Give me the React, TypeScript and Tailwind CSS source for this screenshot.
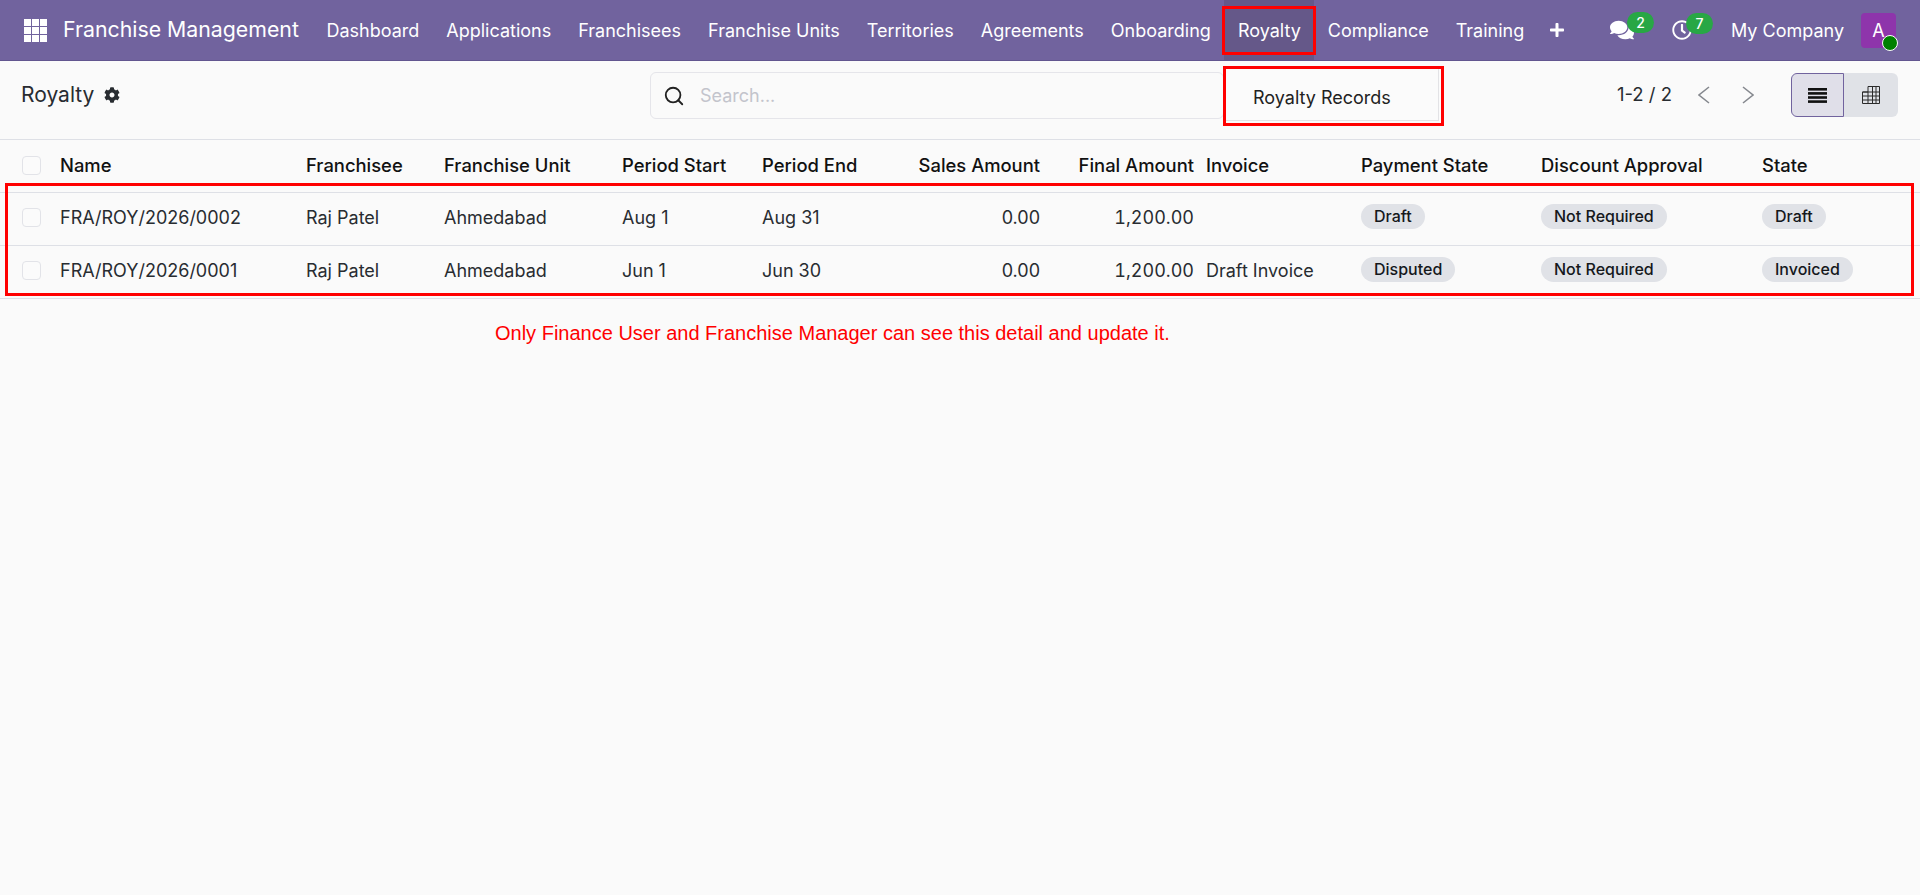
import React from 'react';
import { FaCog, FaComments, FaPlus, FaRegClock } from 'react-icons/fa';
import { Search } from 'lucide-react';

const navItems = ['Dashboard', 'Applications', 'Franchisees', 'Franchise Units', 'Territories', 'Agreements', 'Onboarding', 'Royalty', 'Compliance', 'Training'];

const columns = [
    { label: 'Name', width: 'w-[246px]', right: false },
    { label: 'Franchisee', width: 'w-[138px]', right: false },
    { label: 'Franchise Unit', width: 'w-[178px]', right: false },
    { label: 'Period Start', width: 'w-[140px]', right: false },
    { label: 'Period End', width: 'w-[144px]', right: false },
    { label: 'Sales Amount', width: 'w-[146px]', right: true },
    { label: 'Final Amount', width: 'w-[154px]', right: true },
    { label: 'Invoice', width: 'w-[155px]', right: false },
    { label: 'Payment State', width: 'w-[180px]', right: false },
    { label: 'Discount Approval', width: 'w-[221px]', right: false },
    { label: 'State', width: 'w-[164px]', right: false },
];

const rows = [
    { name: 'FRA/ROY/2026/0002', start: 'Aug 1', end: 'Aug 31', invoice: '', payment: 'Draft', state: 'Draft' },
    { name: 'FRA/ROY/2026/0001', start: 'Jun 1', end: 'Jun 30', invoice: 'Draft Invoice', payment: 'Disputed', state: 'Invoiced' },
];

const Checkbox: React.FC = () => (
    <div className="w-[19px] h-[19px] rounded-[4px] border border-[#e2e3e8] bg-[#fbfbfb] mx-auto" />
);

const Badge: React.FC<{ label: string }> = ({ label }) => (
    <span className="block w-fit rounded-full bg-[#e0e2e7] px-[13px] h-[25px] leading-[25px] text-[16px] font-medium text-[#15181c] mb-[4px]">{label}</span>
);

const AppsIcon: React.FC = () => (
    <svg width="23" height="23" viewBox="0 0 23 23" fill="white">
        {[0, 8, 16].map((y) => [0, 8, 16].map((x) => <rect key={`${x}-${y}`} x={x} y={y} width="7" height="7" />))}
    </svg>
);

const ListIcon: React.FC = () => (
    <svg width="19" height="15" viewBox="0 0 19 15" fill="#111">
        <rect y="0" width="19" height="2.6" />
        <rect y="4.1" width="19" height="2.6" />
        <rect y="8.2" width="19" height="2.6" />
        <rect y="12.3" width="19" height="2.6" />
    </svg>
);

const PivotIcon: React.FC = () => (
    <svg width="18" height="18" viewBox="0 0 18 18" fill="none" stroke="#2a2a2a" strokeWidth="1">
        <path d="M6 .5h11.5v17H.5V6H6zM.5 6h17M.5 10h17M.5 14h17M6 6v11.5M10.5 .5v17M14 .5v17" />
    </svg>
);

const Chevron: React.FC<{ flip?: boolean }> = ({ flip }) => (
    <svg width="12" height="18" viewBox="0 0 12 18" fill="none" stroke="#85888e" strokeWidth="1.6">
        <path d={flip ? 'M1 1l10 8-10 8' : 'M11 1L1 9l10 8'} />
    </svg>
);

const App: React.FC = () => {
    return (
        <div className="relative min-h-[895px] bg-[#fafafa] text-[#282c31] font-['Inter','Noto_Sans',sans-serif] overflow-hidden">
            <nav className="h-[61px] bg-[#71639e] border-b border-[#62558f] flex items-center text-white">
                <div className="ml-6 mr-[16px] flex items-center"><AppsIcon /></div>
                <span className="text-[21.3px] mr-[14px] whitespace-nowrap">Franchise Management</span>
                <div className="flex items-stretch h-full text-[18px]">
                    {navItems.map((item) => (
                        <span key={item} className={`flex items-center px-[13.5px] pt-[1px] whitespace-nowrap ${item === 'Royalty' ? 'bg-[#655889]' : ''}`}>{item}</span>
                    ))}
                    <span className="flex items-center px-[11px]"><FaPlus className="w-[16px] h-[16px]" /></span>
                </div>
                <div className="ml-auto flex items-center">
                    <div className="relative mr-[38px]">
                        <FaComments className="w-[24px] h-[24px]" />
                        <span className="absolute -top-[6px] left-[17px] w-[27px] h-[21px] rounded-full bg-[#28a745] text-[14px] font-medium leading-[21px] text-center">2</span>
                    </div>
                    <div className="relative mr-[39px]">
                        <FaRegClock className="w-[20px] h-[20px]" />
                        <span className="absolute -top-[7px] left-[14px] w-[27px] h-[21px] rounded-full bg-[#28a745] text-[14px] font-medium leading-[21px] text-center">7</span>
                    </div>
                    <span className="text-[18px] mr-[17px] pt-[1px]">My Company</span>
                    <div className="relative w-[35px] h-[35px] rounded-[4px] bg-[#8e35ab] text-[18px] leading-[35px] text-center mr-[24px]">
                        A
                        <span className="absolute -right-[2px] -bottom-[3px] w-[16px] h-[16px] rounded-full bg-[#008000] border border-white" />
                    </div>
                </div>
            </nav>

            <div className="h-[79px] border-b border-[#dee0e6] flex items-start pt-[11px] relative">
                <div className="w-[650px] pl-[21px] flex items-center h-[46px]">
                    <span className="text-[21px]">Royalty</span>
                    <FaCog className="ml-[10px] w-[16px] h-[16px]" />
                </div>
                <div className="w-[574px] h-[47px] border border-[#e5e5ea] rounded-[6px] flex items-center pl-[12px]">
                    <Search className="w-[22px] h-[22px] text-[#222]" strokeWidth={2} />
                    <span className="ml-[15px] text-[18px] text-[#c3c4cc]">Search...</span>
                </div>
                <div className="ml-auto flex items-center h-[46px] pr-[22px]">
                    <span className="text-[18.5px] mr-[26px]">1-2 / 2</span>
                    <div className="mr-[32px]"><Chevron /></div>
                    <div className="mr-[37px]"><Chevron flip /></div>
                    <div className="flex h-[44px]">
                        <div className="w-[53px] flex items-center justify-center bg-[#e0dfe9] border border-[#71639e] rounded-l-[6px]"><ListIcon /></div>
                        <div className="w-[54px] flex items-center justify-center bg-[#e0e2e7] rounded-r-[6px]"><PivotIcon /></div>
                    </div>
                </div>
            </div>

            <table className="w-full table-fixed border-collapse text-[18px]">
                <colgroup>
                    <col className="w-[54px]" />
                    {columns.map((col) => <col key={col.label} className={col.width} />)}
                </colgroup>
                <thead>
                    <tr className="h-[52px] border-b border-[#dee0e6] text-[#111]">
                        <th className="pl-[8px]"><Checkbox /></th>
                        {columns.map((col) => (
                            <th key={col.label} className={`px-[6px] pt-[1px] text-[18.4px] font-medium whitespace-nowrap ${col.right ? 'text-right' : 'text-left'}`}>{col.label}</th>
                        ))}
                    </tr>
                </thead>
                <tbody>
                    {rows.map((row) => (
                        <tr key={row.name} className="h-[53px] border-b border-[#dee0e6]">
                            <td className="pl-[8px] pb-[2px]"><Checkbox /></td>
                            <td className="px-[6px] pb-[3px]">{row.name}</td>
                            <td className="px-[6px] pb-[3px]">Raj Patel</td>
                            <td className="px-[6px] pb-[3px]">Ahmedabad</td>
                            <td className="px-[6px] pb-[3px]">{row.start}</td>
                            <td className="px-[6px] pb-[3px]">{row.end}</td>
                            <td className="px-[6px] pb-[3px] text-right">0.00</td>
                            <td className="px-[6px] pb-[3px] text-right tabular-nums">1,200.00</td>
                            <td className="px-[6px] pb-[3px]">{row.invoice}</td>
                            <td className="px-[6px]"><Badge label={row.payment} /></td>
                            <td className="px-[6px]"><Badge label="Not Required" /></td>
                            <td className="px-[6px]"><Badge label={row.state} /></td>
                        </tr>
                    ))}
                </tbody>
            </table>

            <p className="mt-[19px] ml-[495px] text-[20px] text-[#ff0000] font-['Liberation_Sans',Arial,sans-serif]">Only Finance User and Franchise Manager can see this detail and update it.</p>

            {/* dropdown menu under Royalty, with its annotation box */}
            <div className="absolute left-[1223px] top-[66px] w-[221px] h-[60px] bg-[#fbfbfb] border-[3px] border-[#ff0000] pr-[2px] pb-[2px]">
                <div className="h-full border-r border-b border-[#e3e3e6] flex items-center pl-[27px] pt-[5px] text-[18px] text-[#222]">Royalty Records</div>
            </div>

            {/* red annotation boxes */}
            <div className="absolute left-[1222px] top-[6px] w-[94px] h-[49px] border-[3px] border-[#ff0000] pointer-events-none" />
            <div className="absolute left-[5px] top-[183px] w-[1909px] h-[113px] border-[3px] border-[#ff0000] pointer-events-none" />
        </div>
    );
};

export default App;
